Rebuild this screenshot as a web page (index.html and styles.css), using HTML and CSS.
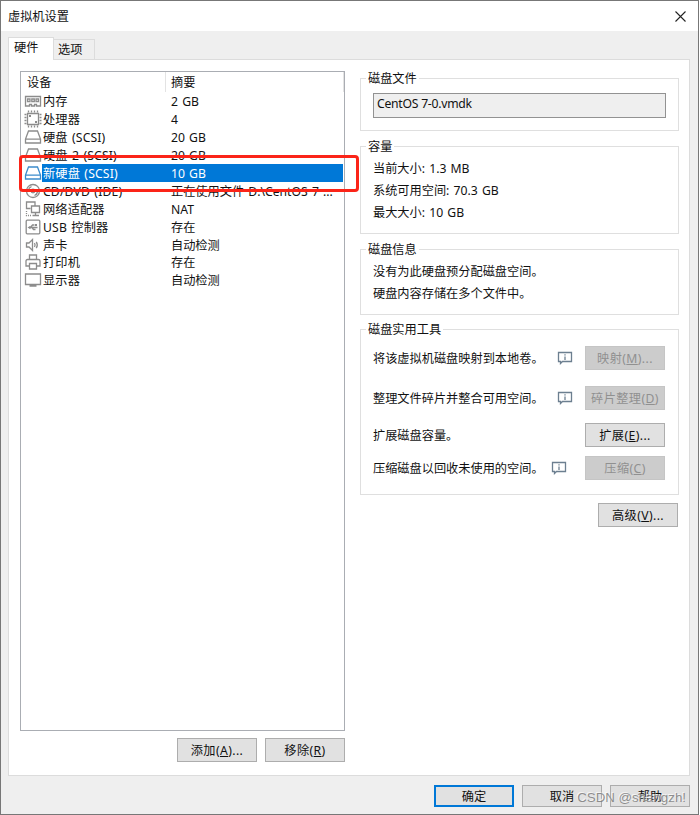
FILE: index.html
```html
<!DOCTYPE html>
<html lang="zh-CN">
<head>
  <meta charset="UTF-8">
  <title>虚拟机设置</title>
  <link rel="stylesheet" href="styles.css">
</head>
<body>
  <div class="window">
    <div class="titlebar">
      <span>虚拟机设置</span>
      <svg class="close" width="11" height="11" viewBox="0 0 11 11"><path d="M.5 .5l10 10M10.500 .5l-10 10"/></svg>
    </div>

    <div class="tabs">
      <div class="tab active">硬件</div>
      <div class="tab">选项</div>
    </div>

    <div class="page">
      <div class="left">
        <div class="list">
          <div class="list-head"><span>设备</span><span>摘要</span></div>
          <div class="row">
            <svg viewBox="0 0 18 18"><path d="M1.500 4.500h15v9.500h-4v-1.500h-2v1.500h-3v-1.500h-2v1.500h-4z"/><path d="M3.500 7h2.500v2.500h-2.500zM7.800 7h2.500v2.500h-2.500zM12 7h2.500v2.500h-2.500z"/></svg>
            <span class="name">内存</span><span class="info">2 GB</span>
          </div>
          <div class="row">
            <svg viewBox="0 0 18 18"><path d="M3.500 3.500h11v11h-11z"/><path d="M4.500 2.500v-2M7.500 2.500v-2M10.500 2.500v-2M13.500 2.500v-2M4.500 17.500v-2M7.500 17.500v-2M10.500 17.500v-2M13.500 17.500v-2M.5 4.500h2M.5 7.500h2M.5 10.500h2M.5 13.500h2M15.500 4.500h2M15.500 7.500h2M15.500 10.500h2M15.500 13.500h2"/><path class="fill" d="M5 5h2v2h-2zM11 11h2v2h-2z"/></svg>
            <span class="name">处理器</span><span class="info">4</span>
          </div>
          <div class="row">
            <svg viewBox="0 0 18 18"><path d="M4.500 3h9l3 8v4h-15v-4zM1.500 11.200h15"/></svg>
            <span class="name">硬盘 (SCSI)</span><span class="info">20 GB</span>
          </div>
          <div class="row">
            <svg viewBox="0 0 18 18"><path d="M4.500 3h9l3 8v4h-15v-4zM1.500 11.200h15"/></svg>
            <span class="name">硬盘 2 (SCSI)</span><span class="info">20 GB</span>
          </div>
          <div class="row selected">
            <svg viewBox="0 0 18 18"><path d="M4.500 3h9l3 8v4h-15v-4zM1.500 11.200h15"/></svg>
            <span class="name">新硬盘 (SCSI)</span><span class="info">10 GB</span>
          </div>
          <div class="row">
            <svg viewBox="0 0 18 18"><circle cx="9" cy="9" r="6.500"/><circle cx="9" cy="9" r="1.800"/><path d="M4.500 8a5 5 0 0 1 3-3.500M13.500 10a5 5 0 0 1-3 3.500"/></svg>
            <span class="name">CD/DVD (IDE)</span><span class="info">正在使用文件 D:\CentOS 7 ...</span>
          </div>
          <div class="row">
            <svg viewBox="0 0 18 18"><path d="M6.500 8.500h-4v-6.500h8.500v3.500M7.500 6h8v6.500h-8zM11.500 12.500v2.500M8.500 15.500h6.500"/><path class="dots" d="M2.500 11v4.500h5"/></svg>
            <span class="name">网络适配器</span><span class="info">NAT</span>
          </div>
          <div class="row">
            <svg viewBox="0 0 18 18"><rect x="2.200" y="2.200" width="13.600" height="13.600" rx="1"/><path d="M5 9.500h8.500M6.500 9.500l2-2.500h2M8 9.500l1.500 2h2"/><path class="fill" d="M3.500 9.500l3-1.800v3.600zM11 6h2v2h-2z"/></svg>
            <span class="name">USB 控制器</span><span class="info">存在</span>
          </div>
          <div class="row">
            <svg viewBox="0 0 18 18"><path d="M2.500 7h2.500l3.500-3.500v11l-3.500-3.500h-2.500z"/><path d="M10.500 7q1.200 2 0 4M12.300 5.800q2 3.200 0 6.400"/></svg>
            <span class="name">声卡</span><span class="info">自动检测</span>
          </div>
          <div class="row">
            <svg viewBox="0 0 18 18"><path d="M5.500 6.500v-4.500h7v4.500M5.500 13h-3.500v-5q0-1.500 1.500-1.500h11q1.500 0 1.500 1.500v5h-3.500M5.500 10.500h7v5.500h-7z"/></svg>
            <span class="name">打印机</span><span class="info">存在</span>
          </div>
          <div class="row">
            <svg viewBox="0 0 18 18"><path d="M1.500 3h15v10.500h-15zM5.500 15h7"/></svg>
            <span class="name">显示器</span><span class="info">自动检测</span>
          </div>
          <div class="highlight"></div>
        </div>
        <div class="list-buttons">
          <button>添加(<u>A</u>)...</button>
          <button>移除(<u>R</u>)</button>
        </div>
      </div>

      <div class="right">
        <section class="group file">
          <h3>磁盘文件</h3>
          <div class="field">CentOS 7-0.vmdk</div>
        </section>
        <section class="group capacity">
          <h3>容量</h3>
          <p>当前大小: 1.3 MB</p>
          <p>系统可用空间: 70.3 GB</p>
          <p>最大大小: 10 GB</p>
        </section>
        <section class="group details">
          <h3>磁盘信息</h3>
          <p>没有为此硬盘预分配磁盘空间。</p>
          <p>硬盘内容存储在多个文件中。</p>
        </section>
        <section class="group tools">
          <h3>磁盘实用工具</h3>
          <div class="tool">
            <span>将该虚拟机磁盘映射到本地卷。</span>
            <svg class="tip" width="16" height="14" viewBox="0 0 16 14"><path d="M1.500 1.500h13v9h-9l-2 2v-2h-2z"/><path d="M8 3.200v1.300M8 5.500v3.500"/></svg>
            <button disabled>映射(<u>M</u>)...</button>
          </div>
          <div class="tool">
            <span>整理文件碎片并整合可用空间。</span>
            <svg class="tip" width="16" height="14" viewBox="0 0 16 14"><path d="M1.500 1.500h13v9h-9l-2 2v-2h-2z"/><path d="M8 3.200v1.300M8 5.500v3.500"/></svg>
            <button disabled>碎片整理(<u>D</u>)</button>
          </div>
          <div class="tool">
            <span>扩展磁盘容量。</span>
            <button>扩展(<u>E</u>)...</button>
          </div>
          <div class="tool compact">
            <span>压缩磁盘以回收未使用的空间。</span>
            <svg class="tip" width="16" height="14" viewBox="0 0 16 14"><path d="M1.500 1.500h13v9h-9l-2 2v-2h-2z"/><path d="M8 3.200v1.300M8 5.500v3.500"/></svg>
            <button disabled>压缩(<u>C</u>)</button>
          </div>
        </section>
        <button class="advanced">高级(<u>V</u>)...</button>
      </div>
    </div>

    <div class="footer">
      <button class="default">确定</button>
      <button>取消</button>
      <button>帮助</button>
    </div>
    <div class="watermark">CSDN @shangzh!</div>
  </div>
</body>
</html>
```
FILE: styles.css
```css
* { box-sizing: border-box; }
body {
  margin: 0;
  background: #fff;
  font: 12.2px/18px "Noto Sans", "Noto Sans CJK SC", sans-serif;
  color: #111;
}
h3, p { margin: 0; font-size: inherit; font-weight: normal; }
svg { fill: none; stroke: #8c8c8c; stroke-width: 1.3; flex: none; }

.window {
  position: relative;
  width: 699px; height: 815px;
  background: #efefef;
  border: 1px solid #777;
}
.titlebar {
  display: flex; justify-content: space-between; align-items: center;
  height: 30px; padding: 0 12px 0 7px;
  background: #fff;
}
.titlebar span { padding-top: 1px; }
.close { stroke: #222; stroke-width: 1.1; }

.tabs { display: flex; align-items: flex-end; height: 28px; padding-left: 7px; }
.tab {
  width: 41px; height: 20px; padding-left: 4px;
  border: 1px solid #dcdcdc; border-left: none; border-bottom: none;
  line-height: 20px;
}
.tab.active {
  position: relative;
  width: 46px; height: 23px; margin-bottom: -1px; padding-left: 5px;
  background: #fff; border-left: 1px solid #dcdcdc;
}

.page {
  display: flex; gap: 15px;
  width: 682px; height: 717px; margin-left: 7px; padding: 11px 10px 0 11px;
  background: #fff; border: 1px solid #dcdcdc;
}
.left { width: 325px; }
.list {
  position: relative;
  height: 660px;
  border: 1px solid #aaadb3;
}
.list-head { display: flex; height: 20px; border-right: 1px solid #e3e3e3; line-height: 22px; }
.list-head span { padding-left: 5px; }
.list-head span:first-child { width: 145px; padding-left: 6px; border-right: 1px solid #e3e3e3; }
.row { display: flex; height: 17.95px; padding-left: 3px; line-height: 19px; word-spacing: 1px; }
.row svg { width: 18px; height: 18px; }
.row .fill { fill: #8c8c8c; stroke: none; }
.row .dots { stroke-dasharray: 1 1; }
.name { width: 124px; padding-left: 1px; white-space: nowrap; letter-spacing: 0.15px; }
.info { flex: 1; padding-left: 5px; white-space: nowrap; }
.selected svg { stroke: #3c8ccb; }
.selected .name, .selected .info { background: #0078d7; color: #fff; }
.selected .info { margin-right: 1px; }
.highlight {
  position: absolute; left: -2px; top: 83px;
  width: 340px; height: 37px;
  border: 3px solid #fb2418; border-radius: 4px;
}
.list-buttons { display: flex; justify-content: flex-end; gap: 8px; margin-top: 7px; }

button {
  flex: none;
  width: 80px; height: 24px; padding: 1px 0 0;
  background: #e1e1e1; border: 1px solid #adadad;
  font: inherit; color: #111; text-align: center; letter-spacing: 0.4px;
}
button:disabled { background: #ccc; border-color: #c5c5c5; color: #909090; }

.right { display: flex; flex-direction: column; width: 319px; padding-top: 7px; }
.group { padding-left: 12px; border: 1px solid #dfdfdf; }
.group h3 { width: fit-content; margin: -9px 0 0 -7px; padding: 0 2px; background: #fff; }
.file { height: 53px; }
.field {
  width: 293px; height: 25px; margin-top: 5px; padding-left: 3px;
  background: #efefef; border: 1px solid #929292; line-height: 20px; letter-spacing: -0.25px;
}
.capacity { height: 88px; margin-top: 15px; }
.group p { height: 22px; line-height: 22px; word-spacing: 1px; }
.capacity h3, .details h3 { margin-bottom: 2px; }
.details { height: 66px; margin-top: 15px; }
.tools { height: 166px; margin-top: 14px; }
.tools h3 { margin-bottom: 7px; }
.tool { display: flex; align-items: center; height: 24px; padding-right: 13px; margin-bottom: 16px; }
.tool span { flex: 1; padding-top: 1px; }
.tool:nth-of-type(2) { margin-bottom: 13px; }
.tool:nth-of-type(3) { margin-bottom: 9px; }
.tip { margin-right: 12px; stroke: #6c7f90; }
.compact .tip { margin-right: 18px; }
.advanced { align-self: flex-end; margin: 8px 1px 0 0; }

.footer { display: flex; justify-content: flex-end; gap: 8px; padding: 9px 8px 0 0; }
.footer button { height: 22px; letter-spacing: 0; }
.footer .default { border: 2px solid #0078d7; }
.watermark {
  position: absolute; right: 12px; bottom: 6px;
  font: 13.3px/20px "Liberation Sans", sans-serif;
  color: rgba(125, 125, 125, 0.85);
  text-shadow: -1px -1px 0 rgba(255, 255, 255, 0.7);
}
```
